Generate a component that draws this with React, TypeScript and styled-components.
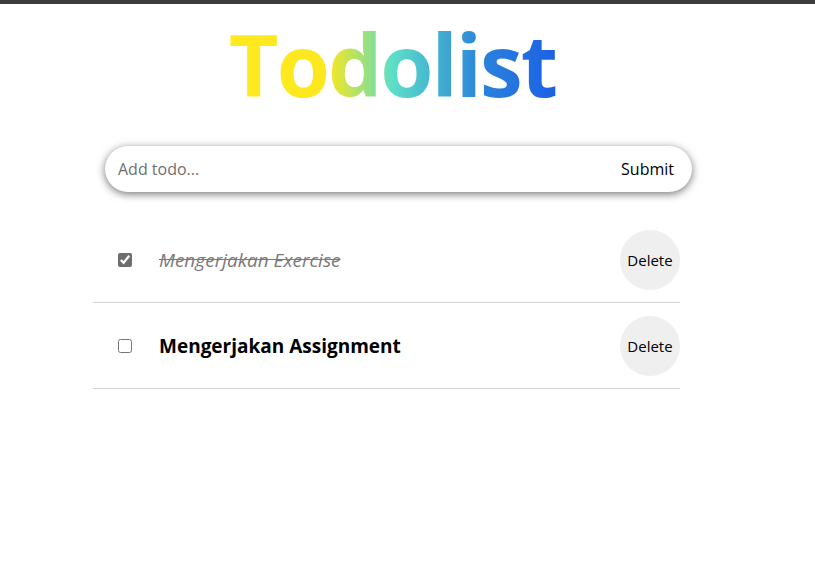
import React, { useState } from "react";
import styled, { createGlobalStyle } from "styled-components";

const GlobalStyle = createGlobalStyle`
  body {
    margin: 0;
    background: #fff;
    font-family: "Open Sans", "Noto Sans", sans-serif;
  }
`;

type Todo = { id: number; title: string; done: boolean };

const initialTodos: Todo[] = [
  { id: 1, title: "Mengerjakan Exercise", done: true },
  { id: 2, title: "Mengerjakan Assignment", done: false },
];

export default function App() {
  const [todos, setTodos] = useState<Todo[]>(initialTodos);
  const [text, setText] = useState("");

  const toggle = (id: number) =>
    setTodos((list) => list.map((t) => (t.id === id ? { ...t, done: !t.done } : t)));

  const remove = (id: number) => setTodos((list) => list.filter((t) => t.id !== id));

  const submit = (e: React.FormEvent) => {
    e.preventDefault();
    if (!text.trim()) return;
    setTodos((list) => [...list, { id: Date.now(), title: text, done: false }]);
    setText("");
  };

  return (
    <>
      <GlobalStyle />
      <TopBar />
      <Page>
        <Title>Todolist</Title>
        <Form onSubmit={submit}>
          <Input
            placeholder="Add todo..."
            value={text}
            onChange={(e) => setText(e.target.value)}
          />
          <SubmitButton type="submit">Submit</SubmitButton>
        </Form>
        <List>
          {todos.map((todo) => (
            <Row key={todo.id}>
              <Check type="checkbox" checked={todo.done} onChange={() => toggle(todo.id)} />
              <TodoText $done={todo.done}>{todo.title}</TodoText>
              <DeleteButton onClick={() => remove(todo.id)}>Delete</DeleteButton>
            </Row>
          ))}
        </List>
      </Page>
    </>
  );
}

const TopBar = styled.div`
  height: 4px;
  background: #3c3c3c;
`;

const Page = styled.main`
  width: 587px;
  margin-left: 93px;
  display: flex;
  flex-direction: column;
`;

const Title = styled.h1`
  margin: 8px 0 0 12px;
  align-self: center;
  font-size: 86px;
  font-weight: 700;
  line-height: 104px;
  letter-spacing: -2px;
  background: linear-gradient(to right, #ffe91f 0%, #fde81f 30%, #9ae07e 42%, #5cdfc8 50%, #3ea8d2 66%, #2a82dc 78%, #1c60e4 100%);
  -webkit-background-clip: text;
  background-clip: text;
  color: transparent;
`;

const Form = styled.form`
  margin: 30px 0 0 12px;
  width: 587px;
  height: 46px;
  box-sizing: border-box;
  display: flex;
  align-items: center;
  border-radius: 23px;
  box-shadow: 0 2px 8px rgba(0, 0, 0, 0.55);
  padding: 0 18px 0 11px;
  background: #fff;
`;

const Input = styled.input`
  flex: 1;
  border: none;
  outline: none;
  font-family: inherit;
  font-size: 16px;
  color: #222;
  background: transparent;

  &::placeholder {
    color: #6f6f6f;
  }
`;

const SubmitButton = styled.button`
  border: none;
  background: transparent;
  font-family: inherit;
  font-size: 16px;
  color: #000;
  padding: 0;
  cursor: pointer;
`;

const List = styled.ul`
  list-style: none;
  margin: 25px 0 0;
  padding: 0;
`;

const Row = styled.li`
  display: flex;
  align-items: center;
  padding: 13px 0 12px 25px;
  border-bottom: 1px solid #d3d3d3;
`;

const Check = styled.input`
  margin: 0;
  width: 14px;
  height: 14px;
  accent-color: #6e6e6e;
`;

const TodoText = styled.span<{ $done: boolean }>`
  flex: 1;
  margin-left: 27px;
  font-size: 19px;
  font-weight: ${({ $done }) => ($done ? 400 : 700)};
  font-style: ${({ $done }) => ($done ? "italic" : "normal")};
  color: ${({ $done }) => ($done ? "#7a7a7a" : "#000")};
  text-decoration: ${({ $done }) => ($done ? "line-through" : "none")};
`;

const DeleteButton = styled.button`
  width: 60px;
  height: 60px;
  border: none;
  border-radius: 50%;
  background: #efefef;
  font-family: inherit;
  font-size: 15px;
  color: #000;
  padding: 0;
  cursor: pointer;
`;
